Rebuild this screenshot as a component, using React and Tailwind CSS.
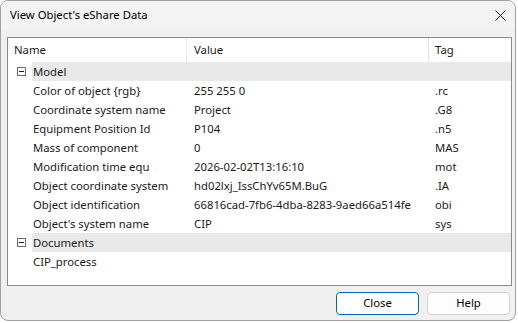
import React from "react";

const groups = [
  {
    name: "Model",
    rows: [
      ["Color of object {rgb}", "255 255 0", ".rc"],
      ["Coordinate system name", "Project", ".G8"],
      ["Equipment Position Id", "P104", ".n5"],
      ["Mass of component", "0", "MAS"],
      ["Modification time equ", "2026-02-02T13:16:10", "mot"],
      ["Object coordinate system", "hd02lxj_IssChYv65M.BuG", ".IA"],
      ["Object identification", "66816cad-7fb6-4dba-8283-9aed66a514fe", "obi"],
      ["Object's system name", "CIP", "sys"],
    ],
  },
  {
    name: "Documents",
    rows: [["CIP_process", "", ""]],
  },
];

function MinusBox() {
  return (
    <div className="w-[24px] flex items-center justify-center">
      <svg width="9" height="9" viewBox="0 0 9 9" className="ml-[2px]">
        <rect x="0.5" y="0.5" width="8" height="8" fill="white" stroke="#6e6e6e" />
        <line x1="2" y1="4.5" x2="7" y2="4.5" stroke="#1a1a1a" />
      </svg>
    </div>
  );
}

export default function App() {
  return (
    <div className="w-[518px] h-[323px] bg-white" style={{ fontFamily: '"Noto Sans", "Segoe UI", sans-serif' }}>
      <div className="w-[516px] h-[321px] rounded-[8px] border border-[#a0a0a0] bg-[#f0f0f0] overflow-hidden flex flex-col text-[11.3px] text-[#1a1a1a]">
        {/* title bar */}
        <div className="h-[29px] bg-[#f3f3f3] flex items-center justify-between pl-[9px] pr-[8px] shrink-0">
          <span className="text-[11.3px] text-black">View Object's eShare Data</span>
          <svg width="11" height="11" viewBox="0 0 11 11" className="mr-[1px]">
            <path d="M0.5 0.5 L10.5 10.5 M10.5 0.5 L0.5 10.5" stroke="#1a1a1a" strokeWidth="1" />
          </svg>
        </div>

        {/* grid panel */}
        <div className="ml-[6px] mt-[7px] w-[505px] h-[249px] border border-[#8a8a8a] bg-white shrink-0">
          <div className="flex h-[24px] leading-[24px]">
            <div className="w-[179px] pl-[6px] border-r border-[#e5e5e5]">Name</div>
            <div className="w-[242px] pl-[7px] border-r border-[#e5e5e5]">Value</div>
            <div className="flex-1 pl-[6px]">Tag</div>
          </div>
          {groups.map((g) => (
            <div key={g.name}>
              <div className="flex h-[19px] items-center">
                <MinusBox />
                <div className="flex-1 h-[19px] leading-[19px] bg-[#e9e9e9] pl-[1px]">{g.name}</div>
              </div>
              {g.rows.map(([n, v, t]) => (
                <div key={n} className="flex h-[19px] leading-[19px]">
                  <div className="w-[179px] pl-[25px] whitespace-nowrap">{n}</div>
                  <div className="w-[242px] pl-[7px] whitespace-nowrap">{v}</div>
                  <div className="flex-1 pl-[6px]">{t}</div>
                </div>
              ))}
            </div>
          ))}
        </div>

        {/* buttons */}
        <div className="flex justify-end gap-[8px] mt-[6px] pr-[5px]">
          <button className="w-[83px] h-[23px] rounded-[4px] border border-[#0067c0] bg-[#fdfdfd] text-[11.3px] text-black">
            Close
          </button>
          <button className="w-[83px] h-[23px] rounded-[4px] border border-[#d0d0d0] bg-[#fdfdfd] text-[11.3px] text-black">
            Help
          </button>
        </div>
      </div>
    </div>
  );
}
